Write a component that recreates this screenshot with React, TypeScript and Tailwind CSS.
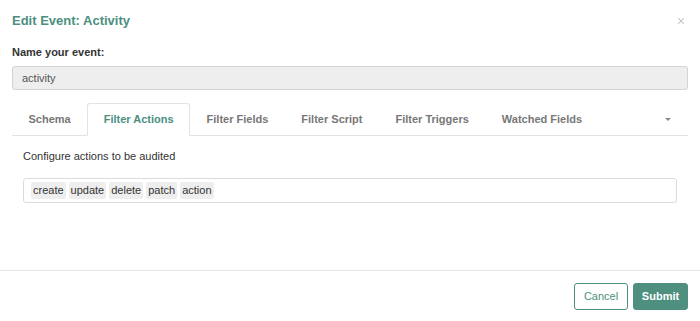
import { X } from "lucide-react";

const tabs = [
  "Schema",
  "Filter Actions",
  "Filter Fields",
  "Filter Script",
  "Filter Triggers",
  "Watched Fields",
];

const actions = ["create", "update", "delete", "patch", "action"];

export default function App() {
  return (
    <div
      className="w-[700px] h-[321px] bg-white flex flex-col text-[#333]"
      style={{ fontFamily: '"Liberation Sans", Arial, sans-serif' }}
    >
      {/* Header */}
      <div className="h-[40px] px-3 pt-[1px] flex items-center justify-between">
        <h4 className="text-[13px] font-bold text-[#4b907f]">Edit Event: Activity</h4>
        <X className="w-[10px] h-[10px] text-[#bbb] mr-[2px]" strokeWidth={2.5} />
      </div>

      {/* Body */}
      <div className="flex-1 px-3">
        <label className="block text-[11px] font-bold leading-[14px] pt-[5px]">Name your event:</label>
        <div className="mt-[7px] h-[24px] rounded-[3px] border border-[#d4d4d4] bg-[#eeeeee] px-[9px] flex items-center text-[11px] text-[#555]">
          activity
        </div>

        <div className="mt-[13px] flex items-end border-b border-[#e3e3e3] h-[33px]">
          {tabs.map((t, i) => (
            <div
              key={t}
              className={
                i === 1
                  ? "h-[33px] -mb-px px-[15.5px] flex items-center text-[11px] font-bold text-[#4b907f] bg-white border border-[#e3e3e3] border-b-white rounded-t-[3px]"
                  : "h-[32px] px-[16.5px] flex items-center text-[11px] font-bold text-[#777]"
              }
            >
              {t}
            </div>
          ))}
          <div className="flex-1" />
          <div className="h-[32px] flex items-center pr-[17px]">
            <div className="w-0 h-0 border-l-[3px] border-r-[3px] border-t-[3px] border-l-transparent border-r-transparent border-t-[#888]" />
          </div>
        </div>

        <div className="px-[11px]">
          <p className="text-[11px] leading-[14px] mt-[13px]">Configure actions to be audited</p>
          <div className="mt-[15px] h-[25px] rounded-[3px] border border-[#dcdcdc] px-[7px] flex items-center gap-[3px]">
            {actions.map((a) => (
              <span
                key={a}
                className="h-[17px] px-[2px] rounded-[2px] bg-[#eeeeee] text-[11px] leading-[17px] text-[#333]"
              >
                {a}
              </span>
            ))}
          </div>
        </div>
      </div>

      {/* Footer */}
      <div className="h-[51px] border-t border-[#e5e5e5] px-3 flex items-center justify-end gap-[5px]">
        <button className="h-[27px] w-[54px] rounded-[3px] border border-[#4e8f80] bg-white text-[11px] text-[#4e8f80]">
          Cancel
        </button>
        <button className="h-[27px] w-[55px] rounded-[3px] border border-[#4e8f80] bg-[#4e8f80] text-[11px] font-bold text-white">
          Submit
        </button>
      </div>
    </div>
  );
}
